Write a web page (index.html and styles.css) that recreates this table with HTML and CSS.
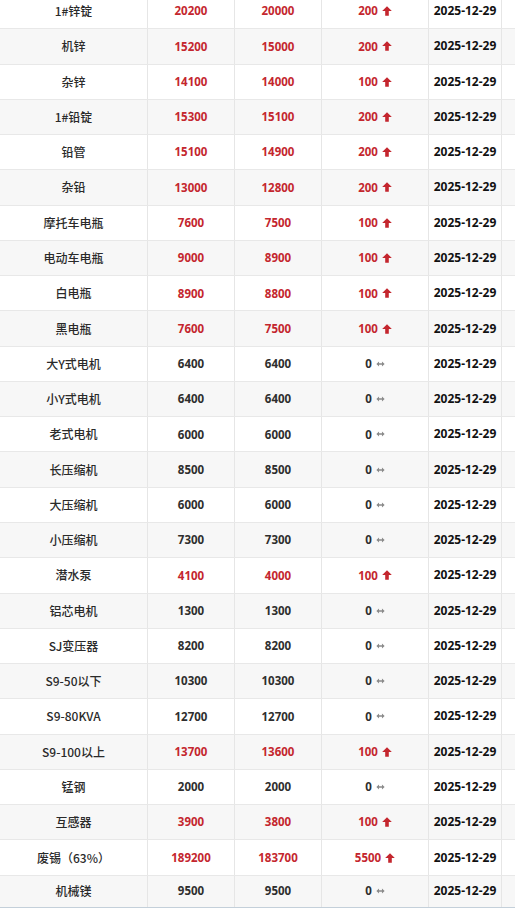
FILE: index.html
```html
<!DOCTYPE html>
<html lang="zh-CN">
<head>
<meta charset="utf-8">
<title>价格表</title>
<link rel="stylesheet" href="styles.css">
</head>
<body>
<svg width="0" height="0" class="defs">
  <defs>
    <symbol id="up" viewBox="0 0 10 10"><path d="M5 0.3 L9.8 5 H6.8 V9.8 H3.2 V5 H0.2 Z"/></symbol>
    <symbol id="flat" viewBox="0 0 10 7"><path d="M0.2 3.5 L3.3 0.6 V2.6 H6.7 V0.6 L9.8 3.5 L6.7 6.4 V4.4 H3.3 V6.4 Z"/></symbol>
  </defs>
</svg>
<div class="table">
  <div class="row"><div class="c name">1#锌锭</div><div class="c num red">20200</div><div class="c num red">20000</div><div class="c chg red">200<svg class="ico up"><use href="#up"/></svg></div><div class="c date">2025-12-29</div><div class="c"></div></div>
  <div class="row"><div class="c name">机锌</div><div class="c num red">15200</div><div class="c num red">15000</div><div class="c chg red">200<svg class="ico up"><use href="#up"/></svg></div><div class="c date">2025-12-29</div><div class="c"></div></div>
  <div class="row"><div class="c name">杂锌</div><div class="c num red">14100</div><div class="c num red">14000</div><div class="c chg red">100<svg class="ico up"><use href="#up"/></svg></div><div class="c date">2025-12-29</div><div class="c"></div></div>
  <div class="row"><div class="c name">1#铅锭</div><div class="c num red">15300</div><div class="c num red">15100</div><div class="c chg red">200<svg class="ico up"><use href="#up"/></svg></div><div class="c date">2025-12-29</div><div class="c"></div></div>
  <div class="row"><div class="c name">铅管</div><div class="c num red">15100</div><div class="c num red">14900</div><div class="c chg red">200<svg class="ico up"><use href="#up"/></svg></div><div class="c date">2025-12-29</div><div class="c"></div></div>
  <div class="row"><div class="c name">杂铅</div><div class="c num red">13000</div><div class="c num red">12800</div><div class="c chg red">200<svg class="ico up"><use href="#up"/></svg></div><div class="c date">2025-12-29</div><div class="c"></div></div>
  <div class="row"><div class="c name">摩托车电瓶</div><div class="c num red">7600</div><div class="c num red">7500</div><div class="c chg red">100<svg class="ico up"><use href="#up"/></svg></div><div class="c date">2025-12-29</div><div class="c"></div></div>
  <div class="row"><div class="c name">电动车电瓶</div><div class="c num red">9000</div><div class="c num red">8900</div><div class="c chg red">100<svg class="ico up"><use href="#up"/></svg></div><div class="c date">2025-12-29</div><div class="c"></div></div>
  <div class="row"><div class="c name">白电瓶</div><div class="c num red">8900</div><div class="c num red">8800</div><div class="c chg red">100<svg class="ico up"><use href="#up"/></svg></div><div class="c date">2025-12-29</div><div class="c"></div></div>
  <div class="row"><div class="c name">黑电瓶</div><div class="c num red">7600</div><div class="c num red">7500</div><div class="c chg red">100<svg class="ico up"><use href="#up"/></svg></div><div class="c date">2025-12-29</div><div class="c"></div></div>
  <div class="row"><div class="c name">大Y式电机</div><div class="c num">6400</div><div class="c num">6400</div><div class="c chg">0<svg class="ico flat"><use href="#flat"/></svg></div><div class="c date">2025-12-29</div><div class="c"></div></div>
  <div class="row"><div class="c name">小Y式电机</div><div class="c num">6400</div><div class="c num">6400</div><div class="c chg">0<svg class="ico flat"><use href="#flat"/></svg></div><div class="c date">2025-12-29</div><div class="c"></div></div>
  <div class="row"><div class="c name">老式电机</div><div class="c num">6000</div><div class="c num">6000</div><div class="c chg">0<svg class="ico flat"><use href="#flat"/></svg></div><div class="c date">2025-12-29</div><div class="c"></div></div>
  <div class="row"><div class="c name">长压缩机</div><div class="c num">8500</div><div class="c num">8500</div><div class="c chg">0<svg class="ico flat"><use href="#flat"/></svg></div><div class="c date">2025-12-29</div><div class="c"></div></div>
  <div class="row"><div class="c name">大压缩机</div><div class="c num">6000</div><div class="c num">6000</div><div class="c chg">0<svg class="ico flat"><use href="#flat"/></svg></div><div class="c date">2025-12-29</div><div class="c"></div></div>
  <div class="row"><div class="c name">小压缩机</div><div class="c num">7300</div><div class="c num">7300</div><div class="c chg">0<svg class="ico flat"><use href="#flat"/></svg></div><div class="c date">2025-12-29</div><div class="c"></div></div>
  <div class="row"><div class="c name">潜水泵</div><div class="c num red">4100</div><div class="c num red">4000</div><div class="c chg red">100<svg class="ico up"><use href="#up"/></svg></div><div class="c date">2025-12-29</div><div class="c"></div></div>
  <div class="row"><div class="c name">铝芯电机</div><div class="c num">1300</div><div class="c num">1300</div><div class="c chg">0<svg class="ico flat"><use href="#flat"/></svg></div><div class="c date">2025-12-29</div><div class="c"></div></div>
  <div class="row"><div class="c name">SJ变压器</div><div class="c num">8200</div><div class="c num">8200</div><div class="c chg">0<svg class="ico flat"><use href="#flat"/></svg></div><div class="c date">2025-12-29</div><div class="c"></div></div>
  <div class="row"><div class="c name">S9-50以下</div><div class="c num">10300</div><div class="c num">10300</div><div class="c chg">0<svg class="ico flat"><use href="#flat"/></svg></div><div class="c date">2025-12-29</div><div class="c"></div></div>
  <div class="row"><div class="c name">S9-80KVA</div><div class="c num">12700</div><div class="c num">12700</div><div class="c chg">0<svg class="ico flat"><use href="#flat"/></svg></div><div class="c date">2025-12-29</div><div class="c"></div></div>
  <div class="row"><div class="c name">S9-100以上</div><div class="c num red">13700</div><div class="c num red">13600</div><div class="c chg red">100<svg class="ico up"><use href="#up"/></svg></div><div class="c date">2025-12-29</div><div class="c"></div></div>
  <div class="row"><div class="c name">锰钢</div><div class="c num">2000</div><div class="c num">2000</div><div class="c chg">0<svg class="ico flat"><use href="#flat"/></svg></div><div class="c date">2025-12-29</div><div class="c"></div></div>
  <div class="row"><div class="c name">互感器</div><div class="c num red">3900</div><div class="c num red">3800</div><div class="c chg red">100<svg class="ico up"><use href="#up"/></svg></div><div class="c date">2025-12-29</div><div class="c"></div></div>
  <div class="row"><div class="c name">废锡（63%）</div><div class="c num red">189200</div><div class="c num red">183700</div><div class="c chg red">5500<svg class="ico up"><use href="#up"/></svg></div><div class="c date">2025-12-29</div><div class="c"></div></div>
  <div class="row last"><div class="c name">机械镁</div><div class="c num">9500</div><div class="c num">9500</div><div class="c chg">0<svg class="ico flat"><use href="#flat"/></svg></div><div class="c date">2025-12-29</div><div class="c"></div></div>
</div>
</body>
</html>
```

FILE: styles.css
```css
html, body {
  margin: 0;
  padding: 0;
  background: #ffffff;
  overflow: hidden;
}

.defs {
  display: block;
  width: 0;
  height: 0;
}

.table {
  width: 515px;
  margin-top: -6px;
  font-family: "Noto Sans CJK SC", "Noto Sans", sans-serif;
  font-size: 12px;
  color: #2a2a2a;
}

.row {
  display: grid;
  grid-template-columns: 148px 87px 87px 107px 73px 13px;
  height: 35.28px;
  box-sizing: border-box;
  border-bottom: 1px solid #e8e8e8;
}

.row:nth-child(even) {
  background: #f7f7f7;
}

.row.last {
  height: 32px;
  border-bottom: 1px solid #c4d0da;
}

.c {
  display: flex;
  align-items: center;
  justify-content: center;
  border-right: 1px solid #e6e6e6;
  box-sizing: border-box;
  white-space: nowrap;
  line-height: 1;
}

.c:last-child {
  border-right: none;
}

.name {
  font-weight: 500;
  color: #2a2a2a;
}

.num,
.chg {
  font-family: "Noto Sans", "Noto Sans CJK SC", sans-serif;
  font-weight: 700;
  font-size: 11.5px;
  color: #2e2e2e;
}

.date {
  font-family: "Noto Sans", "Noto Sans CJK SC", sans-serif;
  font-weight: 700;
  color: #111111;
}

.red {
  color: #c4262e;
}

.ico {
  margin-left: 4px;
}

.ico.up {
  width: 10px;
  height: 10px;
  fill: #c4262e;
}

.ico.flat {
  width: 9px;
  height: 6px;
  fill: #8a8a8a;
}
```
